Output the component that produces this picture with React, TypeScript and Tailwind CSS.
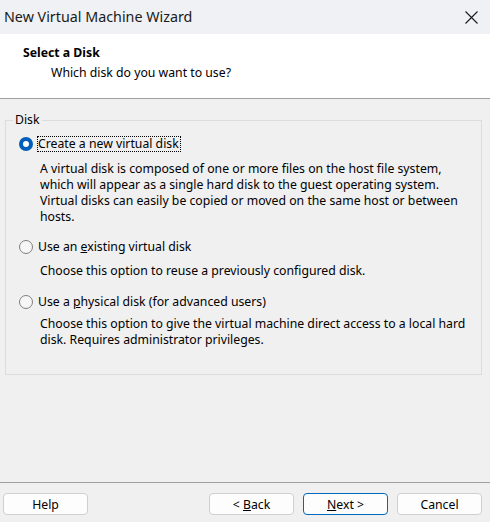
function Radio({ checked }: { checked?: boolean }) {
  if (checked) {
    return (
      <span className="w-[14px] h-[14px] rounded-full bg-[#005fb8] flex items-center justify-center shrink-0">
        <span className="w-[6px] h-[6px] rounded-full bg-white" />
      </span>
    );
  }
  return <span className="w-[14px] h-[14px] rounded-full border border-[#808080] bg-[#f6f6f6] shrink-0" />;
}

function Btn({ children, primary }: { children: React.ReactNode; primary?: boolean }) {
  return (
    <button
      className={
        'w-[85px] h-[22px] rounded-[4px] bg-[#fdfdfd] text-[12.25px] leading-[21px] text-black border ' +
        (primary ? 'border-[#0067c0]' : 'border-[#d0d0d0]')
      }
    >
      {children}
    </button>
  );
}

export default function App() {
  return (
    <div className="w-[490px] h-[522px] bg-[#f0f0f0] flex flex-col text-black font-['Noto_Sans','Liberation_Sans',sans-serif] overflow-hidden">
      {/* title bar */}
      <div className="h-[34px] shrink-0 bg-[#eff1f5] flex items-center justify-between pl-[4px] pr-[12px]">
        <span className="text-[14.3px] text-[#1a1a1a]">New Virtual Machine Wizard</span>
        <svg width="13" height="13" viewBox="0 0 13 13" className="text-[#1a1a1a]">
          <path d="M0.5 0.5 L12.5 12.5 M12.5 0.5 L0.5 12.5" stroke="currentColor" strokeWidth="1.1" />
        </svg>
      </div>

      {/* header */}
      <div className="h-[65px] shrink-0 bg-white border-b border-[#a0a0a0] pt-[11px] pl-[23px] text-[12.25px] leading-[16px]">
        <div className="font-bold">Select a Disk</div>
        <div className="pl-[28px] mt-[4px]">Which disk do you want to use?</div>
      </div>

      {/* body */}
      <div className="flex-1 px-[5px] pt-[21px]">
        <div className="relative border border-[#dcdcdc] h-[255px] w-[477px] pl-[13px] pr-[10px] pt-[15px] text-[12.25px] leading-[16px]">
          <span className="absolute -top-[8px] left-[7px] px-[2px] bg-[#f0f0f0] leading-[14px]">Disk</span>

          <div className="flex items-center gap-[4px] h-[16px]">
            <Radio checked />
            <span className="border border-dotted border-black pr-[1px] leading-[14px]">Create a new virtual disk</span>
          </div>
          <div className="pl-[21px] mt-[9px]">
            A virtual disk is composed of one or more files on the host file system,
            <br />
            which will appear as a single hard disk to the guest operating system.
            <br />
            Virtual disks can easily be copied or moved on the same host or between
            <br />
            hosts.
          </div>

          <div className="flex items-center gap-[5px] h-[16px] mt-[14px]">
            <Radio />
            <span>
              Use an <u>e</u>xisting virtual disk
            </span>
          </div>
          <div className="pl-[21px] mt-[8px]">Choose this option to reuse a previously configured disk.</div>

          <div className="flex items-center gap-[5px] h-[16px] mt-[15px]">
            <Radio />
            <span>
              Use a <u>p</u>hysical disk (for advanced users)
            </span>
          </div>
          <div className="pl-[21px] mt-[6px]">
            Choose this option to give the virtual machine direct access to a local hard
            <br />
            disk. Requires administrator privileges.
          </div>
        </div>
      </div>

      {/* footer */}
      <div className="h-[40px] shrink-0 border-t border-[#a0a0a0] flex items-start pt-[10px] pl-[3px]">
        <Btn>Help</Btn>
        <div className="ml-[121px] flex gap-[9px]">
          <Btn>
            &lt; <u>B</u>ack
          </Btn>
          <Btn primary>
            <u>N</u>ext &gt;
          </Btn>
          <Btn>Cancel</Btn>
        </div>
      </div>
    </div>
  );
}
